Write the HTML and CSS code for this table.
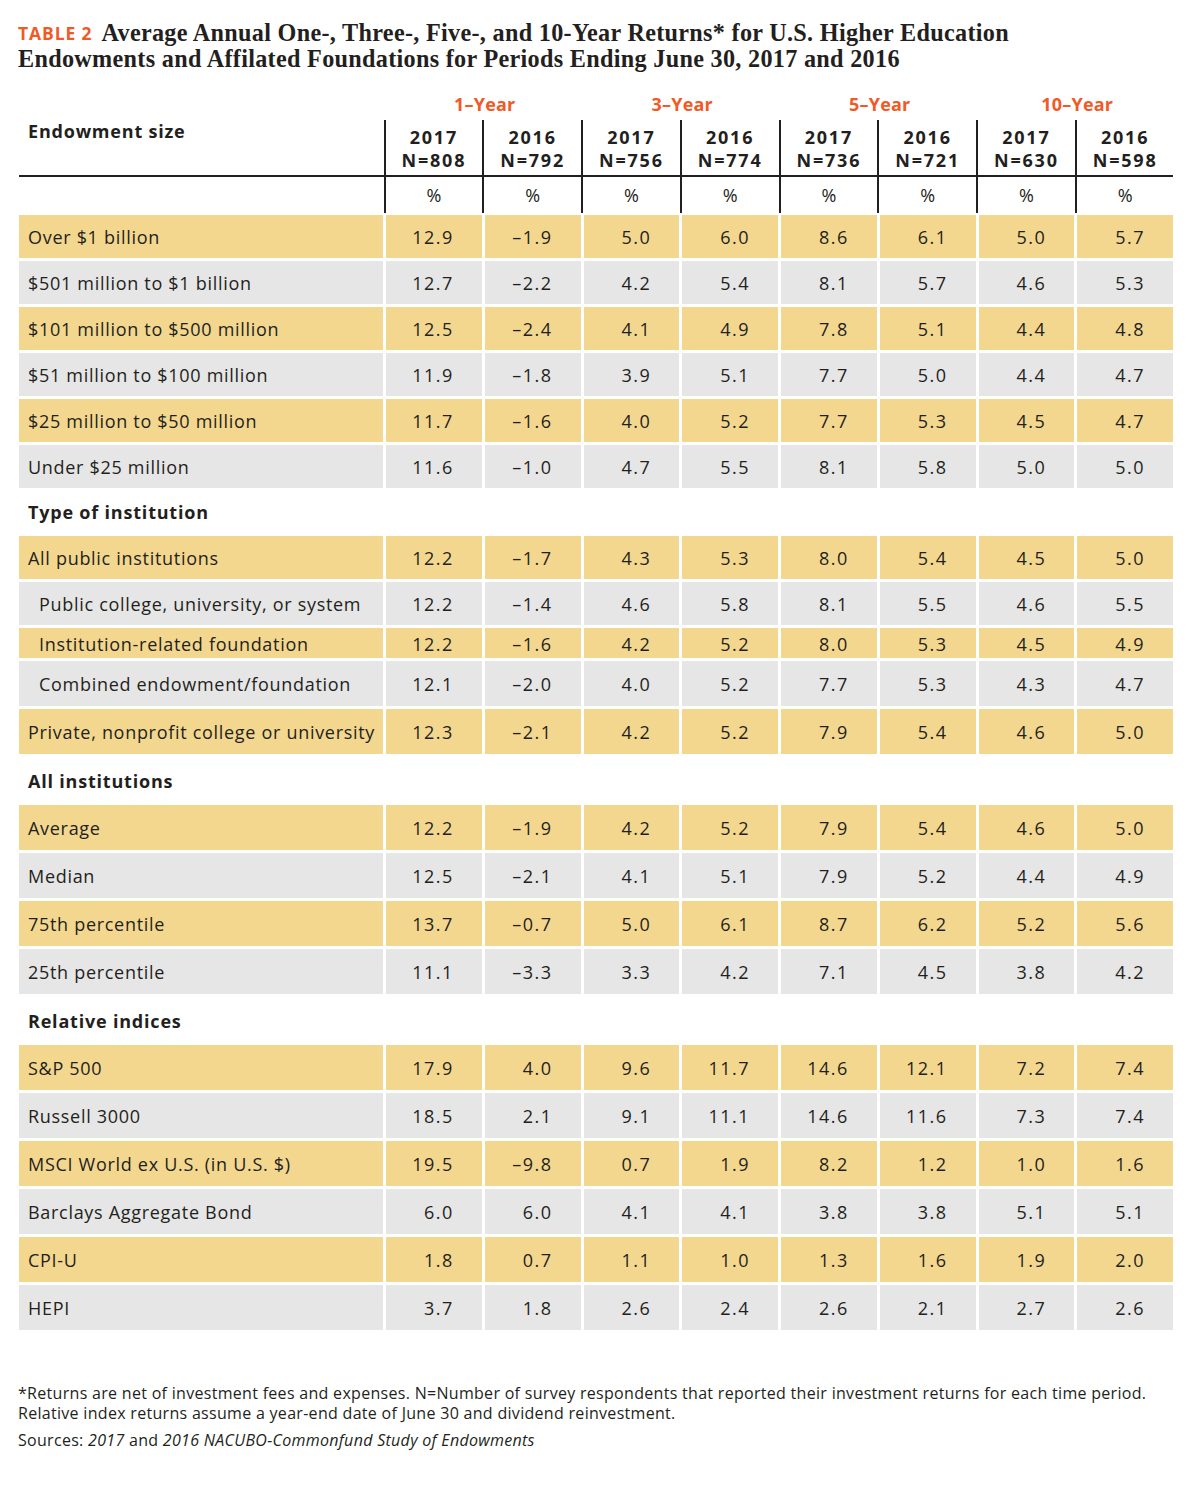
FILE: index.html
```html
<!DOCTYPE html>
<html lang="en">
<head>
<meta charset="utf-8">
<title>Table 2</title>
<link rel="stylesheet" href="styles.css">
</head>
<body>
<div class="page">
  <h1 class="title"><span class="tag">TABLE 2</span>Average Annual One-, Three-, Five-, and 10-Year Returns* for U.S. Higher Education<br>Endowments and Affilated Foundations for Periods Ending June 30, 2017 and 2016</h1>

  <div class="table">
    <div class="hrow groups">
      <div></div>
      <div class="grp">1–Year</div>
      <div class="grp">3–Year</div>
      <div class="grp">5–Year</div>
      <div class="grp">10–Year</div>
    </div>
    <div class="hrow years">
      <div class="hlab">Endowment size</div>
      <div class="yc"><span class="yl">2017</span><span class="yl">N=808</span></div>
      <div class="yc"><span class="yl">2016</span><span class="yl">N=792</span></div>
      <div class="yc"><span class="yl">2017</span><span class="yl">N=756</span></div>
      <div class="yc"><span class="yl">2016</span><span class="yl">N=774</span></div>
      <div class="yc"><span class="yl">2017</span><span class="yl">N=736</span></div>
      <div class="yc"><span class="yl">2016</span><span class="yl">N=721</span></div>
      <div class="yc"><span class="yl">2017</span><span class="yl">N=630</span></div>
      <div class="yc"><span class="yl">2016</span><span class="yl">N=598</span></div>
    </div>
    <div class="hrow pct">
      <div></div>
      <div class="yc">%</div><div class="yc">%</div><div class="yc">%</div><div class="yc">%</div>
      <div class="yc">%</div><div class="yc">%</div><div class="yc">%</div><div class="yc">%</div>
    </div>

    <div class="body">
      <div class="row gold"><div class="lab">Over $1 billion</div><div>12.9</div><div>–1.9</div><div>5.0</div><div>6.0</div><div>8.6</div><div>6.1</div><div>5.0</div><div>5.7</div></div>
      <div class="row gray"><div class="lab">$501 million to $1 billion</div><div>12.7</div><div>–2.2</div><div>4.2</div><div>5.4</div><div>8.1</div><div>5.7</div><div>4.6</div><div>5.3</div></div>
      <div class="row gold"><div class="lab">$101 million to $500 million</div><div>12.5</div><div>–2.4</div><div>4.1</div><div>4.9</div><div>7.8</div><div>5.1</div><div>4.4</div><div>4.8</div></div>
      <div class="row gray"><div class="lab">$51 million to $100 million</div><div>11.9</div><div>–1.8</div><div>3.9</div><div>5.1</div><div>7.7</div><div>5.0</div><div>4.4</div><div>4.7</div></div>
      <div class="row gold"><div class="lab">$25 million to $50 million</div><div>11.7</div><div>–1.6</div><div>4.0</div><div>5.2</div><div>7.7</div><div>5.3</div><div>4.5</div><div>4.7</div></div>
      <div class="row gray"><div class="lab">Under $25 million</div><div>11.6</div><div>–1.0</div><div>4.7</div><div>5.5</div><div>8.1</div><div>5.8</div><div>5.0</div><div>5.0</div></div>

      <div class="section first">Type of institution</div>
      <div class="row gold"><div class="lab">All public institutions</div><div>12.2</div><div>–1.7</div><div>4.3</div><div>5.3</div><div>8.0</div><div>5.4</div><div>4.5</div><div>5.0</div></div>
      <div class="row gray"><div class="lab sub">Public college, university, or system</div><div>12.2</div><div>–1.4</div><div>4.6</div><div>5.8</div><div>8.1</div><div>5.5</div><div>4.6</div><div>5.5</div></div>
      <div class="row gold short"><div class="lab sub">Institution-related foundation</div><div>12.2</div><div>–1.6</div><div>4.2</div><div>5.2</div><div>8.0</div><div>5.3</div><div>4.5</div><div>4.9</div></div>
      <div class="row gray tall"><div class="lab sub">Combined endowment/foundation</div><div>12.1</div><div>–2.0</div><div>4.0</div><div>5.2</div><div>7.7</div><div>5.3</div><div>4.3</div><div>4.7</div></div>
      <div class="row gold tall"><div class="lab">Private, nonprofit college or university</div><div>12.3</div><div>–2.1</div><div>4.2</div><div>5.2</div><div>7.9</div><div>5.4</div><div>4.6</div><div>5.0</div></div>

      <div class="section">All institutions</div>
      <div class="row gold tall"><div class="lab">Average</div><div>12.2</div><div>–1.9</div><div>4.2</div><div>5.2</div><div>7.9</div><div>5.4</div><div>4.6</div><div>5.0</div></div>
      <div class="row gray tall"><div class="lab">Median</div><div>12.5</div><div>–2.1</div><div>4.1</div><div>5.1</div><div>7.9</div><div>5.2</div><div>4.4</div><div>4.9</div></div>
      <div class="row gold tall"><div class="lab">75th percentile</div><div>13.7</div><div>–0.7</div><div>5.0</div><div>6.1</div><div>8.7</div><div>6.2</div><div>5.2</div><div>5.6</div></div>
      <div class="row gray tall"><div class="lab">25th percentile</div><div>11.1</div><div>–3.3</div><div>3.3</div><div>4.2</div><div>7.1</div><div>4.5</div><div>3.8</div><div>4.2</div></div>

      <div class="section">Relative indices</div>
      <div class="row gold tall"><div class="lab">S&amp;P 500</div><div>17.9</div><div>4.0</div><div>9.6</div><div>11.7</div><div>14.6</div><div>12.1</div><div>7.2</div><div>7.4</div></div>
      <div class="row gray tall"><div class="lab">Russell 3000</div><div>18.5</div><div>2.1</div><div>9.1</div><div>11.1</div><div>14.6</div><div>11.6</div><div>7.3</div><div>7.4</div></div>
      <div class="row gold tall"><div class="lab">MSCI World ex U.S. (in U.S. $)</div><div>19.5</div><div>–9.8</div><div>0.7</div><div>1.9</div><div>8.2</div><div>1.2</div><div>1.0</div><div>1.6</div></div>
      <div class="row gray tall"><div class="lab">Barclays Aggregate Bond</div><div>6.0</div><div>6.0</div><div>4.1</div><div>4.1</div><div>3.8</div><div>3.8</div><div>5.1</div><div>5.1</div></div>
      <div class="row gold tall"><div class="lab">CPI-U</div><div>1.8</div><div>0.7</div><div>1.1</div><div>1.0</div><div>1.3</div><div>1.6</div><div>1.9</div><div>2.0</div></div>
      <div class="row gray tall"><div class="lab">HEPI</div><div>3.7</div><div>1.8</div><div>2.6</div><div>2.4</div><div>2.6</div><div>2.1</div><div>2.7</div><div>2.6</div></div>
    </div>
  </div>

  <div class="notes">
    <p>*Returns are net of investment fees and expenses. N=Number of survey respondents that reported their investment returns for each time period.<br>Relative index returns assume a year-end date of June 30 and dividend reinvestment.</p>
    <p class="src">Sources: <i>2017</i> and <i>2016 NACUBO-Commonfund Study of Endowments</i></p>
  </div>
</div>
</body>
</html>
```

FILE: styles.css
```css
* { box-sizing: border-box; }

html, body {
  margin: 0;
  padding: 0;
  background: #ffffff;
}

body {
  color: #231f20;
  font-family: "Open Sans", "Liberation Sans", sans-serif;
}

.page {
  width: 1200px;
  padding: 20px 0 0 18px;
}

.title {
  margin: 0;
  font-family: "Liberation Serif", "DejaVu Serif", serif;
  font-weight: bold;
  font-size: 24.2px;
  line-height: 25px;
  letter-spacing: 0.3px;
  color: #231f20;
}

.tag {
  font-family: "Open Sans", "Liberation Sans", sans-serif;
  font-weight: 700;
  font-size: 17.5px;
  letter-spacing: 0.9px;
  color: #f05a28;
  margin-right: 9px;
  vertical-align: 1px;
}

.table {
  width: 1154px;
  margin-left: 1px;
  margin-top: 21px;
}

.hrow,
.row {
  display: grid;
  grid-template-columns: 364px repeat(8, 1fr);
  column-gap: 3px;
}

.groups {
  grid-template-columns: 364px repeat(4, 1fr);
  height: 28px;
  align-items: center;
}

.grp {
  text-align: center;
  color: #f05a28;
  font-weight: 700;
  font-size: 18px;
  letter-spacing: 0.2px;
  padding: 0 0 5px 3px;
  line-height: 22px;
}

.years {
  height: 57px;
  border-bottom: 2px solid #231f20;
}

.hlab {
  font-weight: 700;
  font-size: 18px;
  letter-spacing: 0.8px;
  padding: 0 0 0 9px;
  line-height: 22px;
}

.yc {
  position: relative;
  text-align: center;
  font-weight: 700;
  font-size: 18px;
  letter-spacing: 1.8px;
  padding-top: 6px;
}

.yl {
  display: block;
  height: 22.5px;
  line-height: 22.5px;
}

.yc::before {
  content: "";
  position: absolute;
  left: -2.5px;
  top: 0;
  bottom: 0;
  width: 2px;
  background: #231f20;
}

.years .yc::before {
  bottom: -2px;
}

.pct {
  height: 36px;
  margin-bottom: 2px;
}

.pct .yc {
  font-weight: 400;
  font-size: 18px;
  letter-spacing: 0;
  line-height: 36px;
  padding-top: 0;
}

.body {
  display: flex;
  flex-direction: column;
  gap: 3px;
}

.row {
  height: 43px;
  font-size: 18px;
}

.row.short { height: 30px; }
.row.tall { height: 45px; }

.row > div {
  display: flex;
  align-items: center;
  justify-content: flex-end;
  padding: 1px 28px 0 0;
  letter-spacing: 1.5px;
}

.row > .lab {
  justify-content: flex-start;
  padding: 1px 0 0 9px;
  letter-spacing: 0.7px;
  white-space: nowrap;
}

.row > .lab.sub {
  padding-left: 20px;
}

.gold > div { background: #f4d78e; }
.gray > div { background: #e6e6e6; }

.section {
  height: 45px;
  display: flex;
  align-items: center;
  padding: 2px 0 0 9px;
  font-weight: 700;
  font-size: 18px;
  letter-spacing: 0.8px;
}

.section.first {
  height: 42px;
  padding-top: 0;
}

.notes {
  margin-top: 53px;
  font-size: 16px;
  line-height: 20px;
  letter-spacing: 0.3px;
}

.notes p {
  margin: 0;
}

.notes .src {
  margin-top: 7px;
}
```
